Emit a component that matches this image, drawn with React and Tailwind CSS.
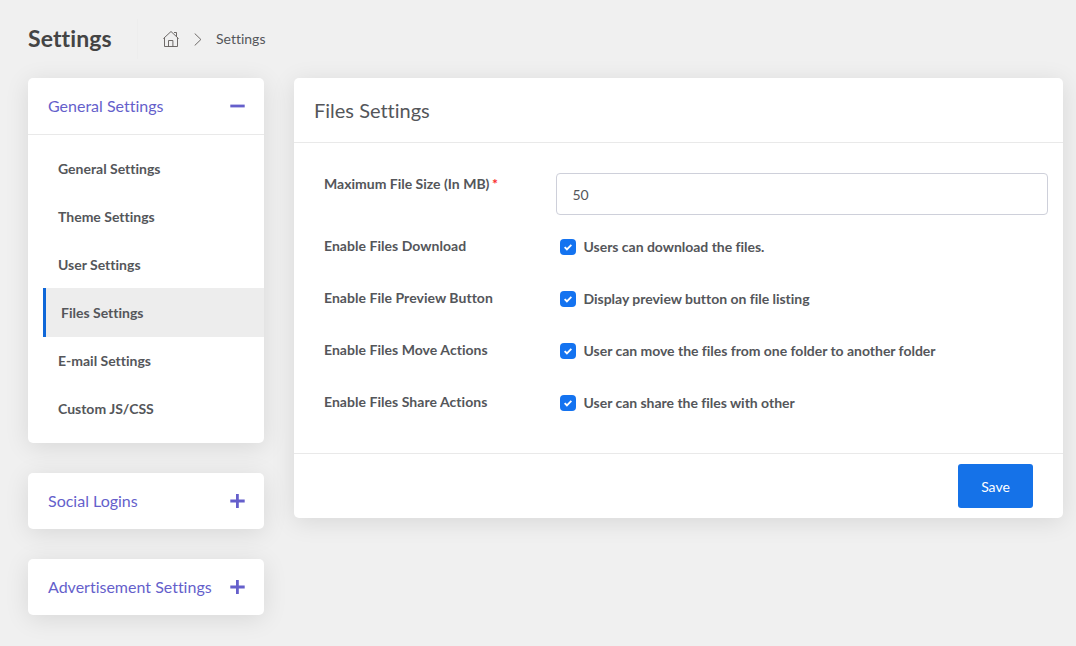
const MENU = [
  'General Settings',
  'Theme Settings',
  'User Settings',
  'Files Settings',
  'E-mail Settings',
  'Custom JS/CSS',
];

const OPTIONS = [
  ['Enable Files Download', 'Users can download the files.'],
  ['Enable File Preview Button', 'Display preview button on file listing'],
  ['Enable Files Move Actions', 'User can move the files from one folder to another folder'],
  ['Enable Files Share Actions', 'User can share the files with other'],
];

const CARD = 'rounded-[5px] bg-white shadow-[0_4px_25px_rgba(0,0,0,0.1)]';

function HomeIcon() {
  return (
    <svg className="h-4 w-4" viewBox="0 0 16 16" fill="none" stroke="#5f5a58" strokeWidth="0.9">
      <path d="M0.4 7.6 8 0.5l7.6 7.1M1.5 6.8v8.7h13V6.8M5.5 15.5V9.5h4.4v6M11 1.5h2.5v4.2" />
    </svg>
  );
}

function ChevronIcon() {
  return (
    <svg className="h-[13px] w-2" viewBox="0 0 8 13" fill="none" stroke="#5f5a58" strokeWidth="0.9">
      <path d="M0.7 0.5 6.9 6.5 0.7 12.5" />
    </svg>
  );
}

function ToggleIcon({ open }) {
  return (
    <svg className="h-[15px] w-[15px]" viewBox="0 0 15 15" stroke="#655fcb" strokeWidth="2.8">
      <path d={open ? 'M0.3 7h14.4' : 'M0.3 7h14.4M7.4 0v14'} />
    </svg>
  );
}

function PanelHeader({ title, open }) {
  return (
    <div className="flex h-14 items-center justify-between pr-[19px] pl-5 text-base text-[#655fcb]">
      <span>{title}</span>
      <ToggleIcon open={open} />
    </div>
  );
}

function Checkbox() {
  return (
    <span className="flex h-4 w-4 items-center justify-center rounded-[4px] bg-[#1473f0]">
      <svg className="h-2 w-2" viewBox="0 0 8 8" fill="none" stroke="#fff" strokeWidth="1.9">
        <path d="M0.6 4.1 2.9 6.3 7.4 1.8" />
      </svg>
    </span>
  );
}

export default function App() {
  return (
    <div className="h-[646px] w-[1076px] overflow-hidden bg-[#f0f0f0] pr-[13px] pl-7 font-[Lato,sans-serif] text-[#54565a] [font-variant-ligatures:none]">
      <header className="flex h-[78px] items-center">
        <h1 className="w-[109px] pb-0.5 text-[23px] leading-8 font-bold tracking-[0.1px] text-[#444]">Settings</h1>
        <div className="h-10 w-px bg-[#ededed]" />
        <nav className="flex items-center pl-[25px] text-sm">
          <HomeIcon />
          <span className="pr-[14px] pl-[15px]"><ChevronIcon /></span>
          <span>Settings</span>
        </nav>
      </header>
      <div className="flex items-start gap-[30px]">
        <aside className="flex w-[236px] flex-col gap-[30px]">
          <section className={CARD}>
            <PanelHeader title="General Settings" open />
            <ul className="h-[309px] border-t border-[#e9e9e9] pt-[9px] pl-[15px] text-sm font-bold">
              {MENU.map((item) => (
                <li
                  key={item}
                  className={
                    item === 'Files Settings'
                      ? 'flex h-[49px] -mb-px items-center border-l-[3px] border-[#0f67d8] bg-[#ededed] pl-[15px]'
                      : 'flex h-12 items-center pt-0.5 pl-[15px]'
                  }
                >
                  {item}
                </li>
              ))}
            </ul>
          </section>
          <section className={CARD}><PanelHeader title="Social Logins" /></section>
          <section className={CARD}><PanelHeader title="Advertisement Settings" /></section>
        </aside>
        <main className={`${CARD} flex-1`}>
          <div className="flex h-[65px] items-center border-b border-[#e9e9e9] pl-5 text-xl">
            <h2>Files Settings</h2>
          </div>
          <form className="h-[310px] pt-[30px] pr-[15px] pl-[30px] text-sm font-bold">
            <div className="flex h-[62px] items-start">
              <label className="w-[232px] leading-[21px]">
                Maximum File Size (In MB) <span className="-ml-px text-[#fa2a2a]">*</span>
              </label>
              <input
                className="h-[42px] flex-1 rounded-[4px] border border-[#ced0da] px-[15.5px] text-sm font-normal outline-none"
                defaultValue="50"
              />
            </div>
            {OPTIONS.map(([label, text]) => (
              <div key={label} className="flex h-[52px] items-start leading-[21px]">
                <span className="w-[236px] tracking-[0.04px]">{label}</span>
                <span className="flex items-center gap-[7.5px] pt-px">
                  <Checkbox />
                  <span className="tracking-[-0.025px]">{text}</span>
                </span>
              </div>
            ))}
          </form>
          <div className="flex h-[65px] items-center justify-end border-t border-[#e9e9e9] pr-[30px]">
            <button className="h-11 w-[75px] rounded-[3px] bg-[#1572e8] pt-0.5 text-sm text-white">Save</button>
          </div>
        </main>
      </div>
    </div>
  );
}
